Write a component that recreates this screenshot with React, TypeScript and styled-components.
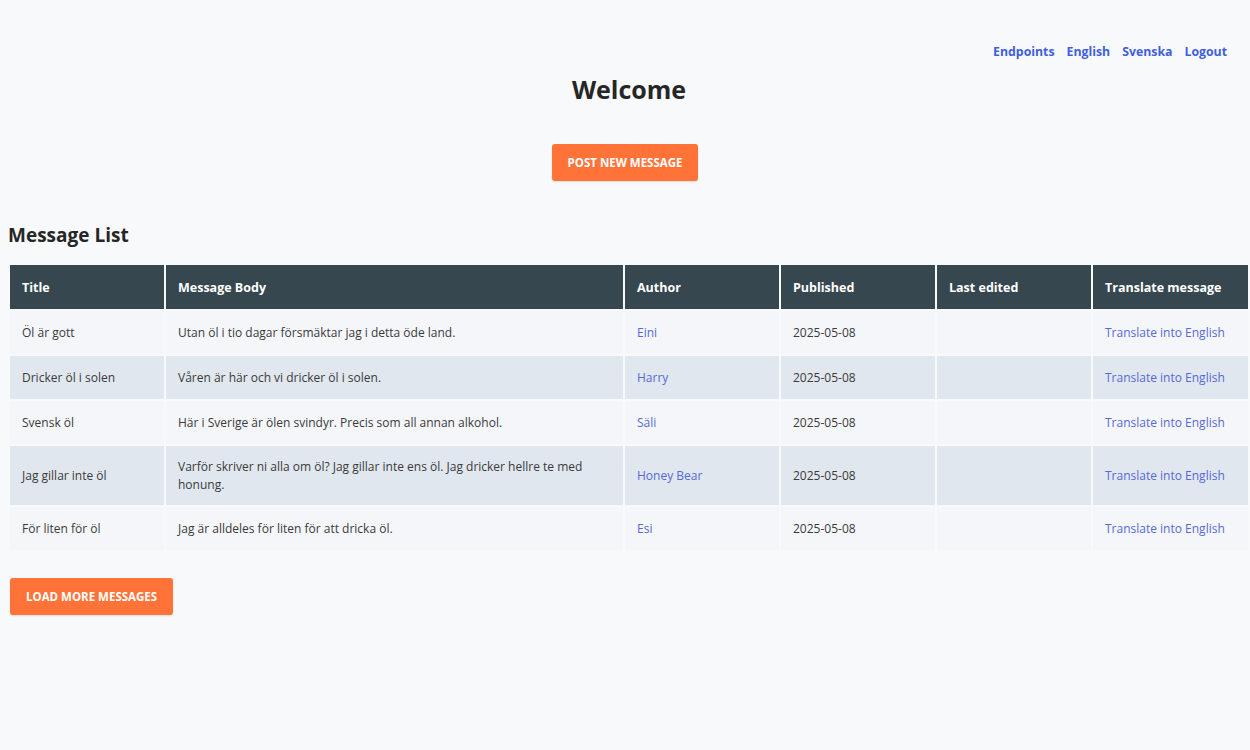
import styled, { createGlobalStyle } from "styled-components";

const GlobalStyle = createGlobalStyle`
  body {
    margin: 0;
    background: #f8f9fa;
    font-family: "Open Sans", "Noto Sans", sans-serif;
    color: #2b2b2b;
  }
`;

type Message = {
  title: string;
  body: string;
  author: string;
  published: string;
  edited?: string;
};

const messages: Message[] = [
  {title: "Öl är gott", body: "Utan öl i tio dagar försmäktar jag i detta öde land.", author: "Eini", published: "2025-05-08"},
  {title: "Dricker öl i solen", body: "Våren är här och vi dricker öl i solen.", author: "Harry", published: "2025-05-08"},
  {title: "Svensk öl", body: "Här i Sverige är ölen svindyr. Precis som all annan alkohol.", author: "Säli", published: "2025-05-08"},
  {
    title: "Jag gillar inte öl",
    body: "Varför skriver ni alla om öl? Jag gillar inte ens öl. Jag dricker hellre te med honung.",
    author: "Honey Bear",
    published: "2025-05-08"
  },
  {title: "För liten för öl", body: "Jag är alldeles för liten för att dricka öl.", author: "Esi", published: "2025-05-08"},
];

const Page = styled.div`
  padding: 43px 0 40px 8px;
`;

const Nav = styled.nav`
  display: flex;
  justify-content: flex-end;
  gap: 12px;
  padding-right: 23px;
`;

const NavLink = styled.a`
  color: #3f5fe0;
  font-weight: 700;
  font-size: 12.3px;
  text-decoration: none;
  cursor: pointer;
`;

const Heading = styled.h1`
  text-align: center;
  font-size: 25px;
  font-weight: 700;
  margin: 12px 0 0;
  color: #262626;
`;

const Center = styled.div`
  display: flex;
  justify-content: center;
  margin: 38px 0 0 -8px;
`;

const Button = styled.button`
  background: #ff7339;
  color: #fff;
  border: none;
  border-radius: 3px;
  font-family: inherit;
  font-weight: 700;
  font-size: 11.5px;
  text-transform: uppercase;
  height: 37px;
  padding: 0 16px;
  cursor: pointer;
  box-shadow: 0 1px 2px rgba(0, 0, 0, 0.12);
`;

const SectionTitle = styled.h2`
  font-size: 19px;
  font-weight: 700;
  margin: 41px 0 15px;
  color: #262626;
`;

const Table = styled.table`
  width: 100%;
  border-collapse: separate;
  border-spacing: 2px;
  font-size: 12px;
`;

const Th = styled.th<{ $w?: number }>`
  background: #37474f;
  color: #fff;
  text-align: left;
  font-weight: 700;
  font-size: 12.5px;
  height: 44px;
  padding: 0 12px;
  width: ${p => (p.$w ? `${p.$w}px` : "auto")};
  box-sizing: border-box;
`;

const Tr = styled.tr<{ $alt: boolean }>`
  background: ${p => (p.$alt ? "#e1e7ee" : "#f4f6fa")};
`;

const Td = styled.td`
  padding: 12px 12px;
  height: 43px;
  box-sizing: border-box;
  color: #3a3a3a;
  vertical-align: middle;
  line-height: 17.5px;
`;

const CellLink = styled.a`
  color: #5669d8;
  text-decoration: none;
  cursor: pointer;
`;

const Footer = styled.div`
  margin-top: 26px;
  padding-left: 2px;
`;

export default function App() {
  return (
    <>
      <GlobalStyle/>
      <Page>
        <Nav>
          <NavLink>Endpoints</NavLink>
          <NavLink>English</NavLink>
          <NavLink>Svenska</NavLink>
          <NavLink>Logout</NavLink>
        </Nav>
        <Heading>Welcome</Heading>
        <Center>
          <Button>Post new message</Button>
        </Center>
        <SectionTitle>Message List</SectionTitle>
        <Table>
          <thead>
          <tr>
            <Th $w={154}>Title</Th>
            <Th>Message Body</Th>
            <Th $w={154}>Author</Th>
            <Th $w={154}>Published</Th>
            <Th $w={154}>Last edited</Th>
            <Th $w={155}>Translate message</Th>
          </tr>
          </thead>
          <tbody>
          {messages.map((m, i) => (
            <Tr key={i} $alt={i % 2 === 1}>
              <Td>{m.title}</Td>
              <Td>{m.body}</Td>
              <Td><CellLink>{m.author}</CellLink></Td>
              <Td>{m.published}</Td>
              <Td>{m.edited ?? ""}</Td>
              <Td><CellLink>Translate into English</CellLink></Td>
            </Tr>
          ))}
          </tbody>
        </Table>
        <Footer>
          <Button>Load more messages</Button>
        </Footer>
      </Page>
    </>
  );
}
